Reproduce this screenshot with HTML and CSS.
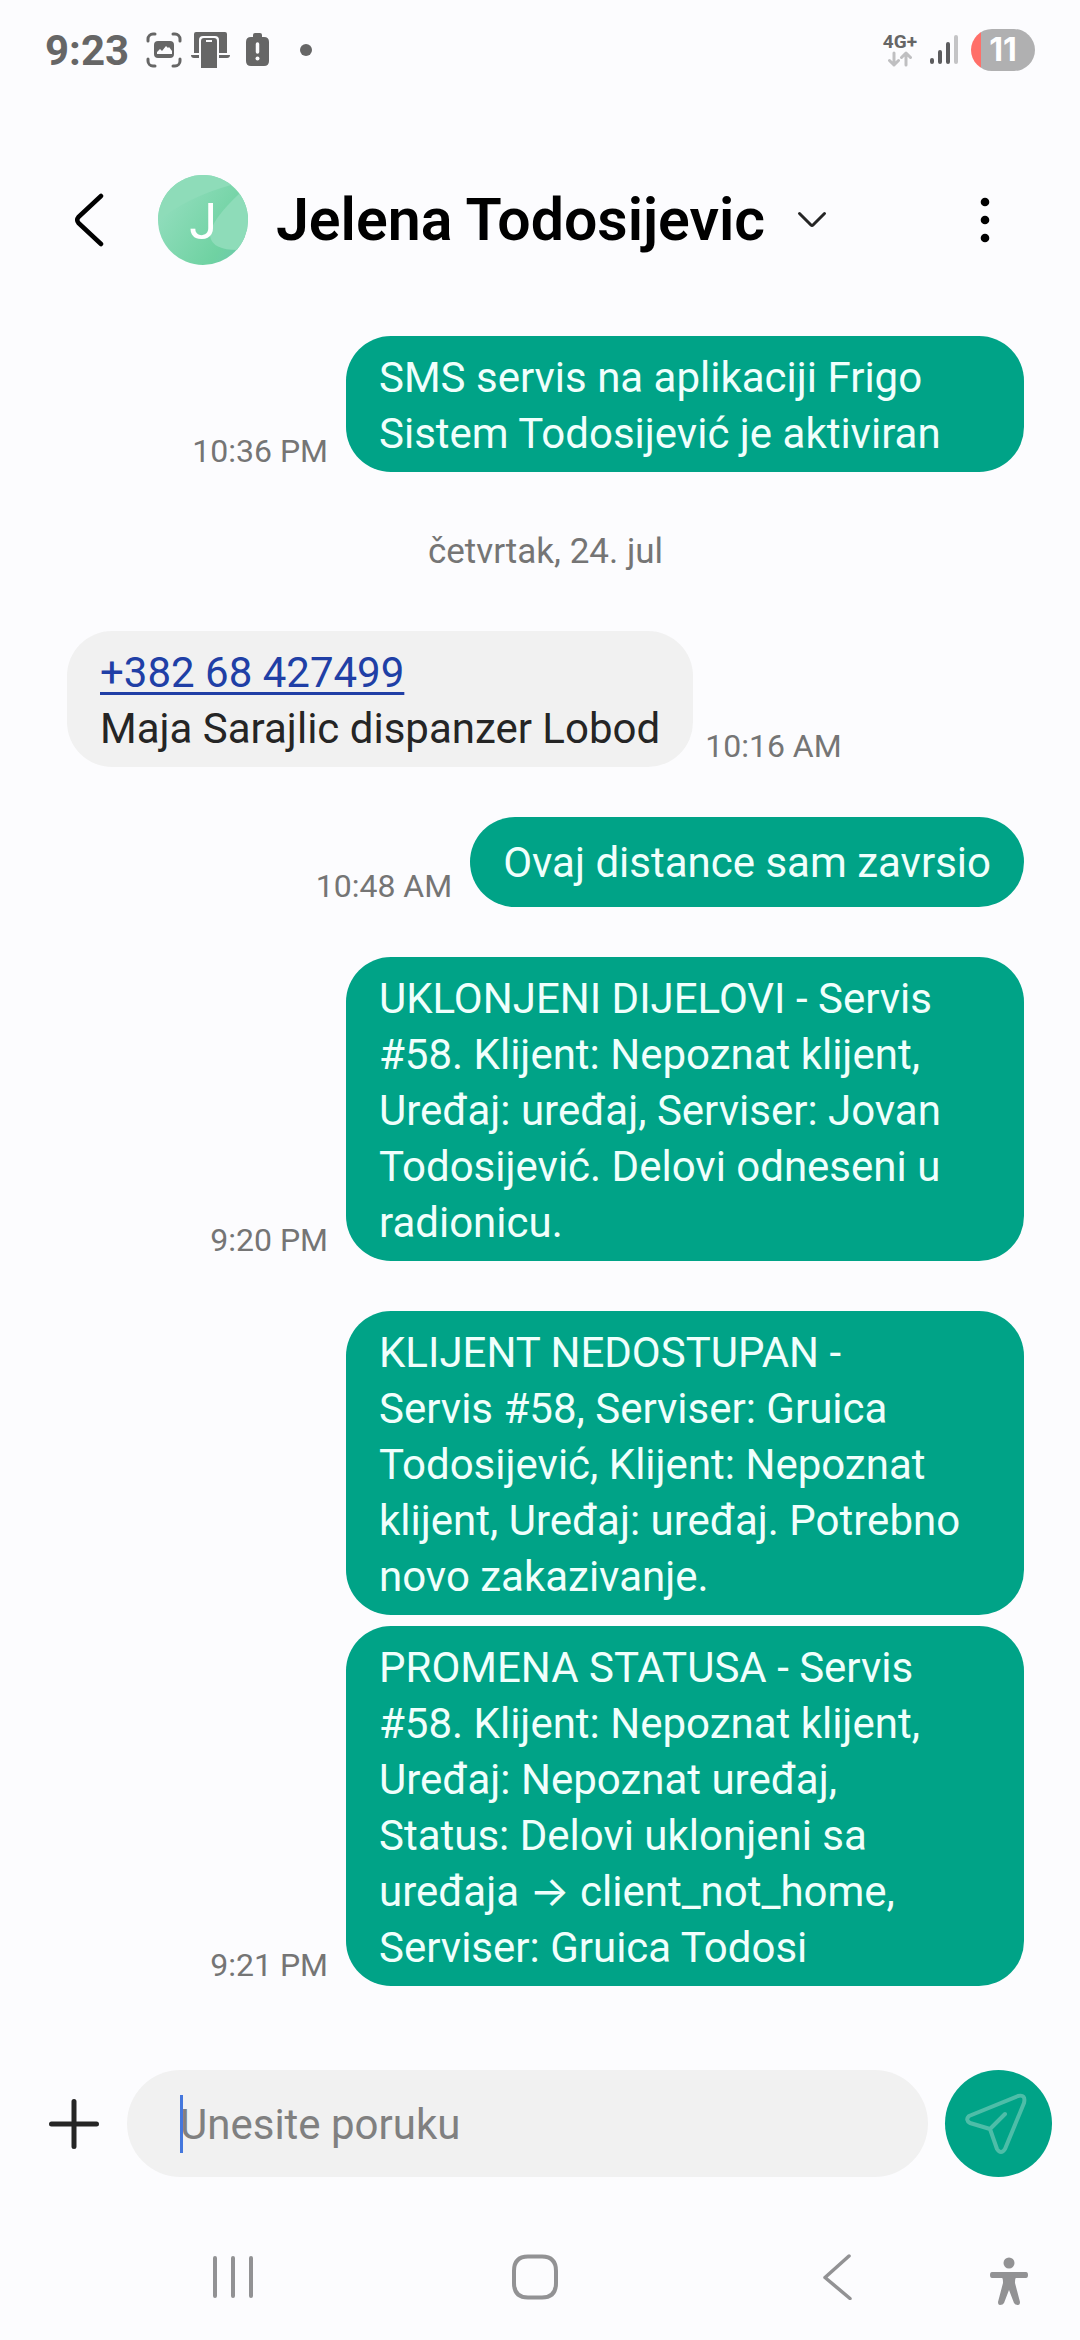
FILE: index.html
```html
<!DOCTYPE html>
<html lang="sr-Latn">
<head>
<meta charset="utf-8">
<meta name="viewport" content="width=device-width, initial-scale=1">
<title>Jelena Todosijevic</title>
<link rel="stylesheet" href="styles.css">
</head>
<body>
<div class="screen">
  <div class="status">
    <span class="clock">9:23</span>
    <svg width="36" height="36" viewBox="0 0 36 36" fill="none" stroke="#666" stroke-width="3" stroke-linecap="round">
      <path d="M2 9V7a5 5 0 0 1 5-5h2M27 2h2a5 5 0 0 1 5 5v2M34 27v2a5 5 0 0 1-5 5h-2M9 34H7a5 5 0 0 1-5-5v-2"/>
      <rect x="8" y="9" width="20" height="17" rx="4" fill="#666" stroke="none"/>
      <path d="M11 22v-2l3-3 2 2 4-5 2 2 1-1 3 4v3z" fill="#fcfcfe" stroke="none"/>
    </svg>
    <svg class="status-flip" width="40" height="36" viewBox="0 0 40 36" fill="#666">
      <path d="M3 21V2q0-2 2-2h29q2 0 2 2v19h-8V8q0-4-4-4H12q-4 0-4 4v13zM0 23h8v3H3q-3 0-3-3zM28 23h11q0 3-3 3h-8z"/>
      <path fill-rule="evenodd" d="M10 36V9q0-3 3-3h10q3 0 3 3v27zM15 8v2h6V8z"/>
    </svg>
    <svg class="status-battery" width="24" height="34" viewBox="0 0 24 34" fill="#666">
      <path d="M7 4V2q0-2 2-2h5q2 0 2 2v2h2q5 0 5 5v19q0 5-5 5H5q-5 0-5-5V9q0-5 5-5z"/>
      <path d="M11.500 11v8" stroke="#fcfcfe" stroke-width="3.500" stroke-linecap="round"/>
      <circle cx="11.500" cy="25.500" r="2" fill="#fcfcfe"/>
    </svg>
    <span class="status-dot"></span>
    <div class="network">
      <span>4G+</span>
      <svg width="24" height="16" viewBox="0 0 24 16" fill="none" stroke="#bfbfc1" stroke-width="3" stroke-linecap="round" stroke-linejoin="round"><path d="M6 2v12M1.500 9.500 6 14l4.500-4.500M18 14V2M13.500 6.500 18 2l4.500 4.500"/></svg>
    </div>
    <svg width="28" height="30" viewBox="0 0 28 30" fill="none" stroke="#5c5c5e" stroke-width="4" stroke-linecap="round"><path d="M2 25v2M10 17v10M18 9v18"/><path d="M26 2v25" stroke="#c4c4c6"/></svg>
    <span class="charge">11</span>
  </div>

  <header class="header">
    <button class="icon-btn" aria-label="Nazad"><svg width="30" height="56" viewBox="0 0 30 56" fill="none" stroke="#000" stroke-width="4.500" stroke-linecap="round" stroke-linejoin="round"><path d="M27 4 4.500 25q-2.500 3 0 6L27 52"/></svg></button>
    <div class="avatar">
      <svg width="90" height="90" viewBox="0 0 90 90">
        <defs>
          <linearGradient id="face" x1="0" y1="0.200" x2="1" y2="0.900"><stop offset="0.150" stop-color="#8edcba"/><stop offset="0.750" stop-color="#6fd2a2"/><stop offset="1" stop-color="#6cc7ae"/></linearGradient>
          <clipPath id="disc"><circle cx="45" cy="45" r="45"/></clipPath>
        </defs>
        <g clip-path="url(#disc)">
          <rect width="90" height="90" fill="url(#face)"/>
          <path d="M0 46Q30 22 73 10L90 0H0z" fill="#8edcb9"/>
          <path d="M82 18Q52 46 52 61Q54 75 80 75L90 72V12z" fill="#8edcb9"/>
        </g>
      </svg>
      <span class="initial">J</span>
    </div>
    <h1 class="name">Jelena Todosijevic</h1>
    <button class="icon-btn expand" aria-label="Detalji"><svg width="30" height="18" viewBox="0 0 30 18" fill="none" stroke="#252525" stroke-width="3" stroke-linecap="round" stroke-linejoin="round"><path d="M2.500 2.500 14 14q1 1 2 0L27.500 2.500"/></svg></button>
    <button class="icon-btn more" aria-label="Meni"><svg width="10" height="46" viewBox="0 0 10 46" fill="#000"><circle cx="5" cy="5" r="4.300"/><circle cx="5" cy="23" r="4.300"/><circle cx="5" cy="41" r="4.300"/></svg></button>
  </header>

  <main class="thread">
    <div class="msg sent"><time class="time">10:36 PM</time><p class="bubble">SMS servis na aplikaciji Frigo Sistem Todosijević je aktiviran</p></div>
    <p class="date">četvrtak, 24. jul</p>
    <div class="msg received"><p class="bubble"><a href="tel:+38268427499">+382 68 427499</a><br>Maja Sarajlic dispanzer Lobod</p><time class="time">10:16 AM</time></div>
    <div class="msg sent"><time class="time">10:48 AM</time><p class="bubble single">Ovaj distance sam zavrsio</p></div>
    <div class="msg sent"><time class="time">9:20 PM</time><p class="bubble">UKLONJENI DIJELOVI - Servis #58. Klijent: Nepoznat klijent, Uređaj: uređaj, Serviser: Jovan Todosijević. Delovi odneseni u radionicu.</p></div>
    <div class="group">
      <div class="msg sent"><p class="bubble">KLIJENT NEDOSTUPAN - Servis&nbsp;#58, Serviser: Gruica Todosijević, Klijent: Nepoznat klijent, Uređaj: uređaj. Potrebno novo zakazivanje.</p></div>
      <div class="msg sent"><time class="time">9:21 PM</time><p class="bubble">PROMENA STATUSA - Servis #58. Klijent: Nepoznat klijent, Uređaj: Nepoznat uređaj,<br>Status: Delovi uklonjeni sa<br>uređaja → client_not_home, Serviser: Gruica Todosi</p></div>
    </div>
  </main>

  <form class="composer">
    <button type="button" class="icon-btn" aria-label="Dodaj"><svg width="50" height="50" viewBox="0 0 50 50" stroke="#252525" stroke-width="5" stroke-linecap="round"><path d="M25 2.500v45M2.500 25h45"/></svg></button>
    <div class="field">
      <input class="input" type="text" placeholder="Unesite poruku" aria-label="Unesite poruku">
      <span class="caret"></span>
    </div>
    <button type="button" class="send" aria-label="Pošalji"><svg width="68" height="64" viewBox="0 0 68 64" fill="none" stroke="#4dbda8" stroke-width="4" stroke-linecap="round" stroke-linejoin="round"><path d="M4 24 53 4Q61 2 59 11L40 57Q36 63 32 57L25 37 5 31Q0 28 4 24zM25 37 40 22"/></svg></button>
  </form>

  <nav class="navbar">
    <button class="icon-btn" aria-label="Nedavno"><svg width="42" height="44" viewBox="0 0 42 44" stroke="#929294" stroke-width="4" stroke-linecap="round"><path d="M3 3v38M21 3v38M39 3v38"/></svg></button>
    <button class="icon-btn" aria-label="Početni ekran"><svg width="48" height="46" viewBox="0 0 48 46" fill="none" stroke="#929294" stroke-width="4"><path d="M17 2.500h14Q45 2.500 45 17v12Q45 43.500 31 43.500H17Q3 43.500 3 29V17Q3 2.500 17 2.500z"/></svg></button>
    <button class="icon-btn" aria-label="Nazad"><svg width="30" height="46" viewBox="0 0 30 46" fill="none" stroke="#929294" stroke-width="3.500" stroke-linecap="round" stroke-linejoin="round"><path d="M27 2 3 23.500 28 44.500"/></svg></button>
    <button class="icon-btn access" aria-label="Pristupačnost"><svg width="40" height="48" viewBox="0 0 40 48" fill="#929294"><circle cx="20" cy="6" r="5.500"/><path d="M3 15h34q2 0 2 3t-2 3H27q-1 0-1 5l5 19q0 3-2 3-3 0-4-2l-5-13-5 13q-1 2-4 2-2 0-2-3l5-19q0-5-1-5H3q-2 0-2-3t2-3z"/></svg></button>
  </nav>
</div>
</body>
</html>
```

FILE: styles.css
```css
* { box-sizing: border-box; }

body {
  margin: 0;
  background: #fcfcfe;
  color: #252525;
  font-family: Roboto, Inter, "Noto Sans", sans-serif;
}

h1, p { margin: 0; font-weight: 400; }
svg { display: block; flex: none; }
button, input { font: inherit; border: 0; margin: 0; }

.screen {
  display: flex;
  flex-direction: column;
  min-height: 100vh;
}

.icon-btn {
  display: flex;
  align-items: center;
  justify-content: center;
  padding: 0;
  background: none;
  flex: none;
}

/* status bar */
.status {
  display: flex;
  align-items: center;
  height: 100px;
  padding: 0 45px;
  color: #666;
}
.clock { font-size: 42px; font-weight: 700; margin-right: 17px; }
.status-flip { margin-left: 9px; }
.status-battery { margin-left: 15px; }
.status-dot {
  width: 12px;
  height: 12px;
  margin-left: 30px;
  border-radius: 50%;
  background: #666;
}
.network {
  display: flex;
  flex-direction: column;
  align-items: center;
  margin-left: auto;
  margin-right: 13px;
  font-size: 19px;
  line-height: 18px;
  font-weight: 700;
}
.charge {
  width: 64px;
  height: 42px;
  margin-left: 13px;
  border-radius: 21px;
  background: linear-gradient(90deg, #ff6f69 10px, #b0b0b1 10px);
  color: #fff;
  font-family: Inter, sans-serif;
  font-size: 32px;
  line-height: 42px;
  font-weight: 700;
  text-align: center;
}

/* conversation header */
.header {
  display: flex;
  align-items: center;
  height: 90px;
  margin: 75px 0 71px;
  padding: 0 90px 0 74px;
}
.avatar {
  position: relative;
  margin-left: 54px;
}
.initial {
  position: absolute;
  inset: 0;
  color: #fff;
  font-size: 50px;
  line-height: 94px;
  text-align: center;
}
.name {
  margin-left: 28px;
  color: #000;
  font-size: 59px;
  line-height: 90px;
  font-weight: 600;
  white-space: nowrap;
}
.expand { margin-left: 32px; }
.more { margin-left: auto; }

/* messages */
.thread {
  display: flex;
  flex-direction: column;
  flex: 1;
  gap: 50px;
  padding: 0 56px 0 67px;
}
.group {
  display: flex;
  flex-direction: column;
  gap: 11px;
}
.msg {
  display: flex;
  align-items: flex-end;
}
.sent {
  justify-content: flex-end;
  gap: 18px;
}
.received { gap: 12px; }
.bubble {
  max-width: 678px;
  padding: 14px 33px 10px;
  border-radius: 45px;
  font-size: 42px;
  line-height: 56px;
}
.single { padding: 18px 33px 16px; }
.sent .bubble {
  background: #00a387;
  color: #f0fffc;
}
.received .bubble { background: #f1f1f1; }
.bubble a {
  color: #203fa6;
  text-decoration-thickness: 3px;
  text-underline-offset: 5px;
}
.time {
  flex: none;
  color: #757575;
  font-size: 32px;
  line-height: 42px;
}
.date {
  color: #757575;
  font-size: 35px;
  line-height: 59px;
  text-align: center;
}

/* composer */
.composer {
  display: flex;
  align-items: center;
  height: 107px;
  padding: 0 28px 0 49px;
}
.field {
  position: relative;
  flex: 1;
  margin: 0 17px 0 28px;
}
.input {
  display: block;
  width: 100%;
  height: 107px;
  padding: 2px 53px 0;
  border-radius: 54px;
  background: #f1f1f1;
  color: #252525;
  font-size: 42px;
  outline: 0;
}
.input::placeholder { color: #808080; opacity: 1; }
.caret {
  position: absolute;
  left: 53px;
  top: 25px;
  width: 3px;
  height: 58px;
  background: #4477dd;
}
.send {
  display: flex;
  align-items: center;
  justify-content: center;
  width: 107px;
  height: 107px;
  padding: 0;
  border-radius: 50%;
  background: #00a387;
}

/* system navigation */
.navbar {
  display: grid;
  grid-template-columns: 1fr 1fr 1fr 42px;
  align-items: center;
  height: 126px;
  margin-top: 37px;
  padding: 0 50px 0 82px;
}
.access { padding-top: 8px; }
```
